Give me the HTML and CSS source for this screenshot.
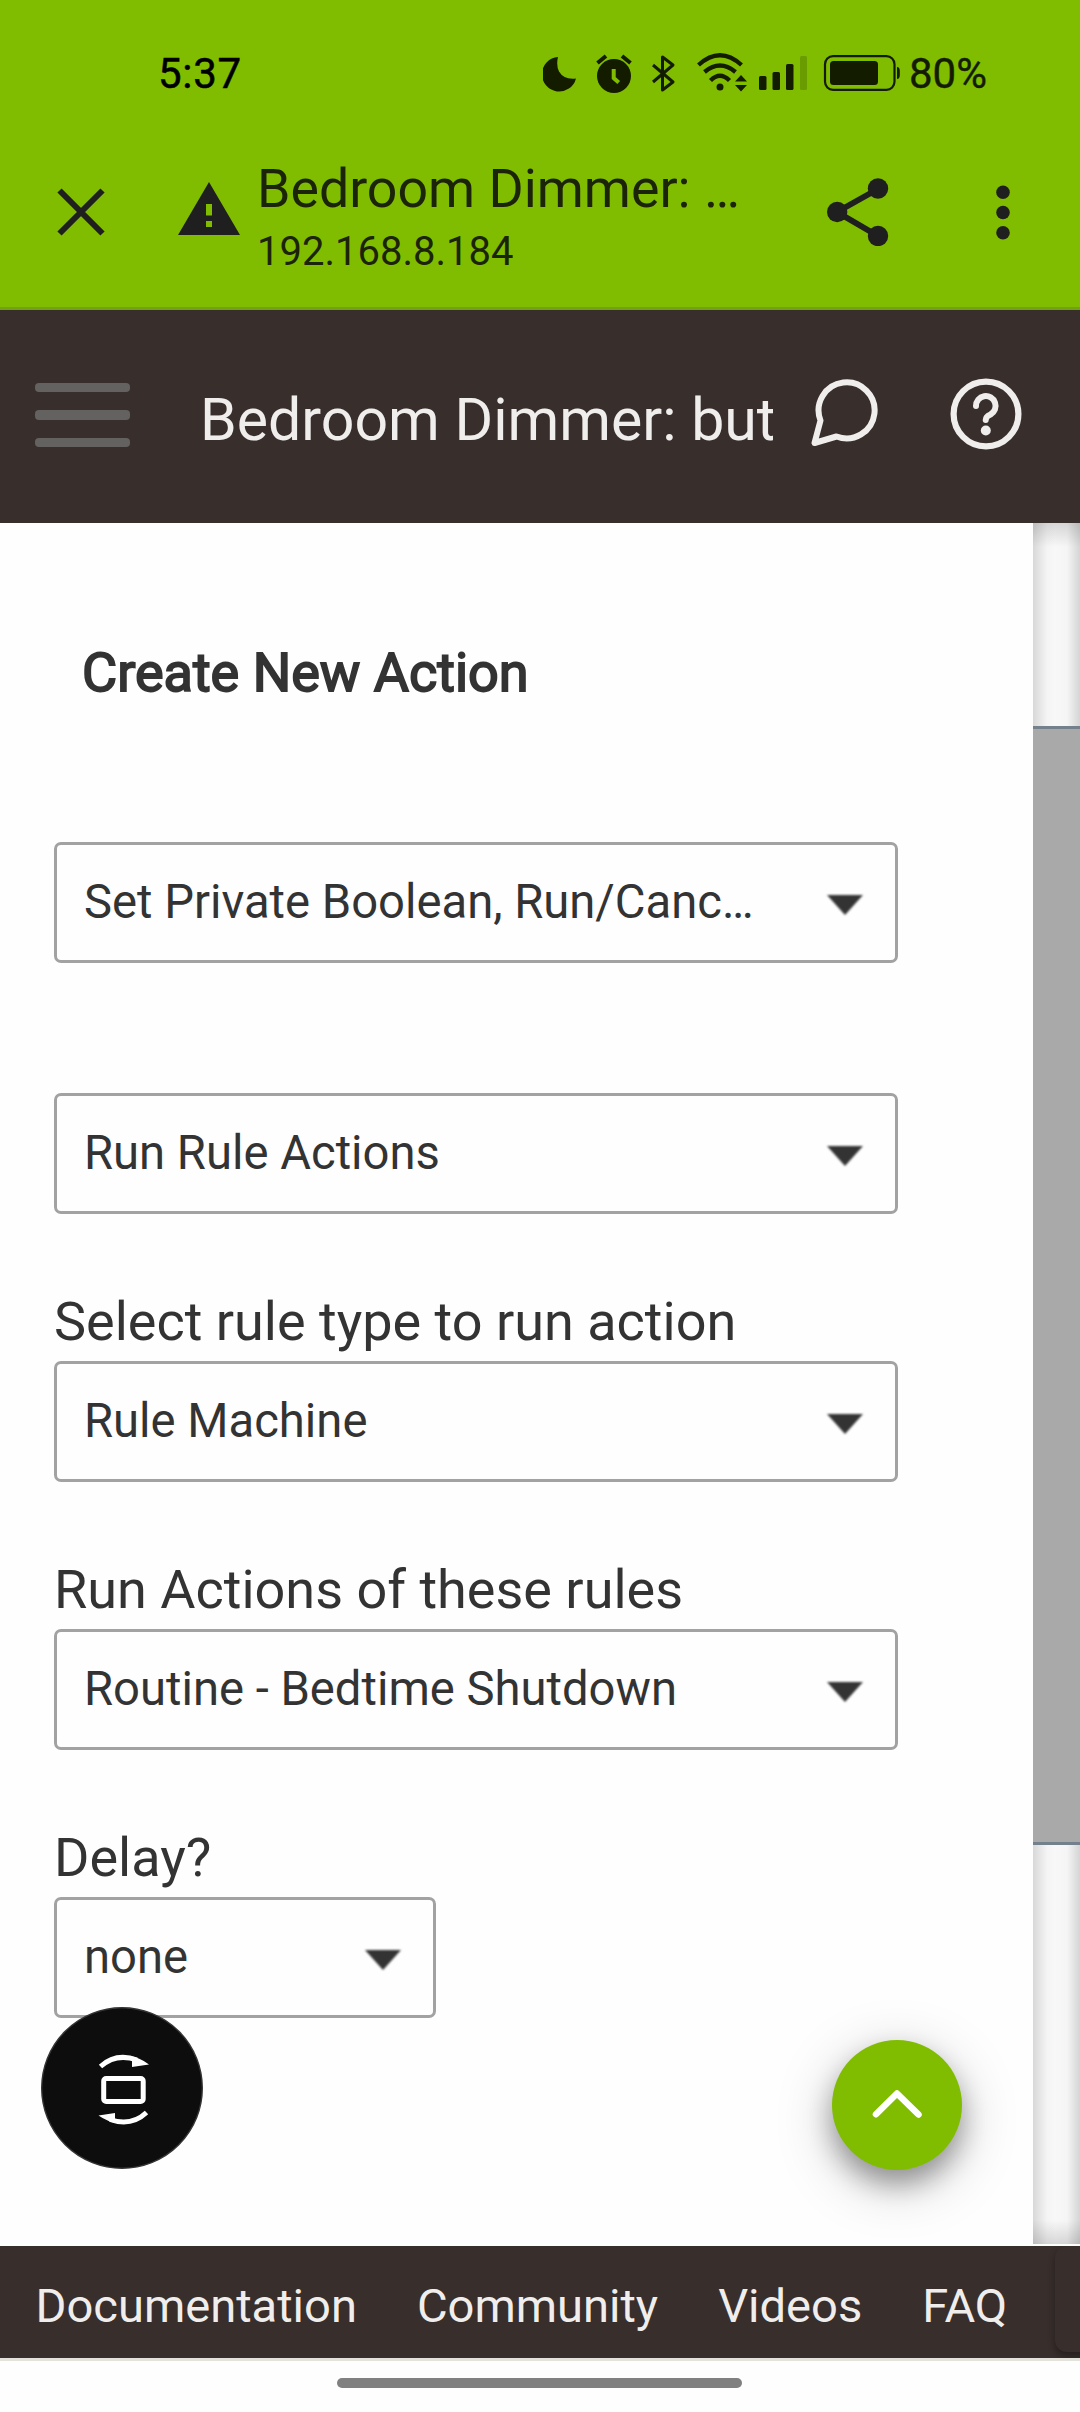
FILE: index.html
```html
<!DOCTYPE html>
<html lang="en">
<head>
<meta charset="utf-8">
<title>Bedroom Dimmer</title>
<link rel="stylesheet" href="styles.css">
</head>
<body>
<div class="status">
  <span class="clock">5:37</span>
  <svg class="status-icons" width="358" height="44" viewBox="543 51 358 44" fill="#141c00">
    <path d="M558 57A17.3 17.3 0 1 0 576 78.500Q564 80 559 71.500Q556 65 558 57Z"/>
    <circle cx="614" cy="76" r="17"/>
    <path d="M597.500 63L606 56M630.500 63L622 56" stroke="#141c00" stroke-width="4" fill="none"/>
    <path d="M613.700 69V78L618.700 82.500" stroke="#80bc00" stroke-width="4" fill="none"/>
    <path d="M653 65L673 82L662.500 90V57L673 65L653 82" stroke="#141c00" stroke-width="3" fill="none" stroke-linejoin="round"/>
    <g fill="none" stroke="#141c00" stroke-width="4.300"><path d="M698.500 65Q720 45.500 741.500 65M704.500 72Q720 59 735.500 72M710.500 80.500Q720 71 729.500 80.500"/></g>
    <circle cx="720" cy="87" r="3.500"/>
    <path d="M735 81.500L741 75L747 81.500ZM735 85L741 91.500L747 85Z"/>
    <rect x="759" y="76" width="7.500" height="14" rx="1.500"/><rect x="772.500" y="72" width="7.500" height="18" rx="1.500"/><rect x="786" y="64" width="7.500" height="26" rx="1.500"/><rect x="800" y="56" width="7" height="34" rx="1.500" opacity=".2"/>
    <rect x="825" y="56.200" width="69.500" height="33.600" rx="8" fill="none" stroke="#141c00" stroke-width="2.200"/>
    <rect x="830" y="61" width="48" height="24" rx="3.500"/><path d="M897 67Q899.800 67 899.800 71V75Q899.800 79 897 79Z"/>
  </svg>
  <span class="charge">80%</span>
</div>
<header class="tab-bar">
  <svg class="close" width="48" height="48" viewBox="0 0 48 48"><path d="M2.500 2.500L45.500 45.500M45.500 2.500L2.500 45.500" stroke="#1f1f1f" stroke-width="6" fill="none"/></svg>
  <svg class="warn" width="62" height="53" viewBox="0 0 62 53"><path d="M31 0L62 53H0ZM28 22V33.500H34V22ZM28 39V45H34V39Z" fill="#1f1f1f" fill-rule="evenodd"/></svg>
  <div class="page-id"><div class="page-title">Bedroom Dimmer: …</div><div class="page-host">192.168.8.184</div></div>
  <svg class="share" width="62" height="68" viewBox="827 178 62 68"><path d="M878 189L837 212L878 236" stroke="#1f1f1f" stroke-width="6" fill="none"/><g fill="#1f1f1f"><circle cx="878" cy="188.500" r="10.200"/><circle cx="837.200" cy="212" r="10.200"/><circle cx="878" cy="236" r="10.200"/></g></svg>
  <svg class="more" width="14" height="56" viewBox="0 0 14 56" fill="#1f1f1f"><circle cx="7" cy="7.300" r="6.800"/><circle cx="7" cy="27.500" r="6.800"/><circle cx="7" cy="47.800" r="6.800"/></svg>
</header>
<nav class="app-bar">
  <div class="burger"><i></i><i></i><i></i></div>
  <div class="app-title">Bedroom Dimmer: but</div>
  <svg class="chat" width="70" height="70" viewBox="810 378 70 70"><path d="M820.500 420.500A28 28 0 1 1 836.500 436.500L814.500 443Z" fill="none" stroke="#f0eeed" stroke-width="6" stroke-linejoin="round"/></svg>
  <svg class="help" width="72" height="72" viewBox="949.500 378 72 72" fill="none" stroke="#f0eeed"><circle cx="985.500" cy="414" r="32.400" stroke-width="6.200"/><path d="M975.500 406A9.800 9.800 0 1 1 990 414.500Q985.200 416.500 985.200 420" stroke-width="6" stroke-linecap="round"/><circle cx="985.300" cy="430.500" r="5" fill="#f0eeed" stroke="none"/></svg>
</nav>
<div class="content">
  <main class="panel">
    <h1 class="heading">Create New Action</h1>
    <div class="field first"><div class="select"><span>Set Private Boolean, Run/Canc…</span><svg class="arrow" width="38" height="22" viewBox="0 0 38 22"><path d="M1 1H37L19 21Z"/></svg></div></div>
    <div class="field second"><div class="select"><span>Run Rule Actions</span><svg class="arrow" width="38" height="22" viewBox="0 0 38 22"><path d="M1 1H37L19 21Z"/></svg></div></div>
    <div class="field"><div class="label">Select rule type to run action</div><div class="select"><span>Rule Machine</span><svg class="arrow" width="38" height="22" viewBox="0 0 38 22"><path d="M1 1H37L19 21Z"/></svg></div></div>
    <div class="field"><div class="label">Run Actions of these rules</div><div class="select"><span>Routine - Bedtime Shutdown</span><svg class="arrow" width="38" height="22" viewBox="0 0 38 22"><path d="M1 1H37L19 21Z"/></svg></div></div>
    <div class="field"><div class="label">Delay?</div><div class="select short"><span>none</span><svg class="arrow" width="38" height="22" viewBox="0 0 38 22"><path d="M1 1H37L19 21Z"/></svg></div></div>
  </main>
  <aside class="behind"><div class="pane top"></div><div class="table-edge"></div><div class="pane bottom"></div></aside>
</div>
<footer class="links"><span>Documentation</span><span>Community</span><span>Videos</span><span>FAQ</span><div class="next-card"></div></footer>
<div class="gesture"><div class="pill"></div></div>
<svg class="rotate" width="162" height="162" viewBox="41 2007 162 162"><circle cx="122" cy="2088" r="80.300" fill="#0d0d0d" stroke="#353535" stroke-width="1.400"/><g fill="none" stroke="#fff" stroke-width="5"><rect x="103.700" y="2078.500" width="39.500" height="23" rx="2.500"/><path d="M100.500 2066.500Q116 2052.500 137 2060M146.500 2112.500Q131 2127 110 2119.500"/></g><path d="M130 2056Q139 2057 149 2064.500L132 2067V2061ZM117 2123Q108 2122 98.500 2115.500L115 2113V2119Z" fill="#fff"/></svg>
<svg class="to-top" width="130" height="130" viewBox="832 2040 130 130"><path d="M876 2114.300L897 2093.500L918.500 2114.500" fill="none" stroke="#fff" stroke-width="6.500" stroke-linecap="round" stroke-linejoin="round"/></svg>
</body>
</html>
```
FILE: styles.css
```css
* { box-sizing: border-box; }
body { margin: 0; width: 1080px; height: 2412px; overflow: hidden; position: relative; background: #fefefe; font-family: Roboto, sans-serif; color: #333; }
svg { display: block; flex: none; }
.status { height: 146px; background: #80bc00; display: flex; align-items: flex-start; padding: 51px 0 0 158px; color: #000; }
.clock { width: 385px; font-size: 42px; line-height: 45px; letter-spacing: .7px; -webkit-text-stroke: .5px #000; }
.charge { margin-left: 8px; font-size: 42px; line-height: 45px; color: #141c00; -webkit-text-stroke: .4px #141c00; }
.tab-bar { height: 164px; background: #80bc00; border-bottom: 3px solid #72a211; display: flex; align-items: flex-start; color: #1b2408; }
.close { margin: 42px 0 0 57px; }
.warn { margin: 36px 0 0 73px; }
.page-id { width: 569px; padding: 11px 0 0 17px; white-space: nowrap; }
.page-title { font-size: 53.700px; line-height: 64px; }
.page-host { font-size: 40px; line-height: 50px; margin-top: 6px; }
.share { margin: 32px 0 0 18px; }
.more { margin: 39px 0 0 107px; }
.app-bar { height: 213px; background: #382e2c; display: flex; align-items: flex-start; color: #f0eeed; }
.burger { margin: 73px 0 0 35px; width: 95px; display: grid; gap: 18px; }
.burger i { height: 9.300px; border-radius: 4px; background: #636261; }
.app-title { margin: 74px 0 0 70px; width: 573px; font-size: 59px; line-height: 72px; white-space: nowrap; overflow: hidden; }
.chat { margin: 68px 0 0 37px; }
.help { margin: 68px 0 0 69.500px; }
.content { height: 1723px; display: flex; }
.panel { width: 1033px; padding: 0 0 0 54px; background: #fefefe; }
.heading { margin: 119px 0 0 28px; font-size: 54px; line-height: 62px; font-weight: 400; -webkit-text-stroke: 1.800px #333; }
.field { margin-top: 77px; }
.first { margin-top: 138px; }
.second { margin-top: 130px; }
.label { font-size: 54px; line-height: 64px; margin: -1px 0 7px; white-space: nowrap; }
.select { width: 844px; height: 121px; border: 3px solid #a2a2a2; border-radius: 7px; padding: 0 31px 0 27px; display: flex; justify-content: space-between; font-size: 47.200px; line-height: 114px; white-space: nowrap; }
.short { width: 382px; }
.arrow { margin-top: 49px; fill: #333; filter: blur(.8px); }
.behind { width: 47px; display: flex; flex-direction: column; height: 1721px; }
.top { height: 203px; background: linear-gradient(#0002, #0000 24px), linear-gradient(90deg, #d8d8d8, #f4f4f4 14px, #f8f8f8 22px, #f5f5f5 34px, #d4d4d4); }
.table-edge { height: 1119px; background: #a9a9a9; border: solid #74818d; border-width: 3px 0; }
.bottom { flex: 1; background: linear-gradient(0deg, #0002, #0000 24px), linear-gradient(90deg, #d8d8d8, #f4f4f4 14px, #f8f8f8 22px, #f5f5f5 34px, #d4d4d4); }
.links { height: 115px; background: #382e2c; border-bottom: 3px solid #e3e3dc; display: flex; gap: 60px; padding-left: 35.500px; font-size: 47.100px; line-height: 119px; color: #f0eeed; overflow: hidden; }
.next-card { flex: none; width: 40px; height: 106px; margin-left: -12px; border-radius: 12px; background: #382e2c; box-shadow: 0 4px 7px #0005; }
.gesture { height: 51px; padding-top: 17px; }
.pill { width: 405px; height: 10px; margin-left: 337px; border-radius: 5px; background: #808080; }
.rotate { position: absolute; left: 41px; top: 2007px; }
.to-top { position: absolute; left: 832px; top: 2040px; border-radius: 50%; background: #80bc00; box-shadow: 0 14px 58px rgba(0,0,0,.22), 0 14px 26px rgba(0,0,0,.32); }
```
